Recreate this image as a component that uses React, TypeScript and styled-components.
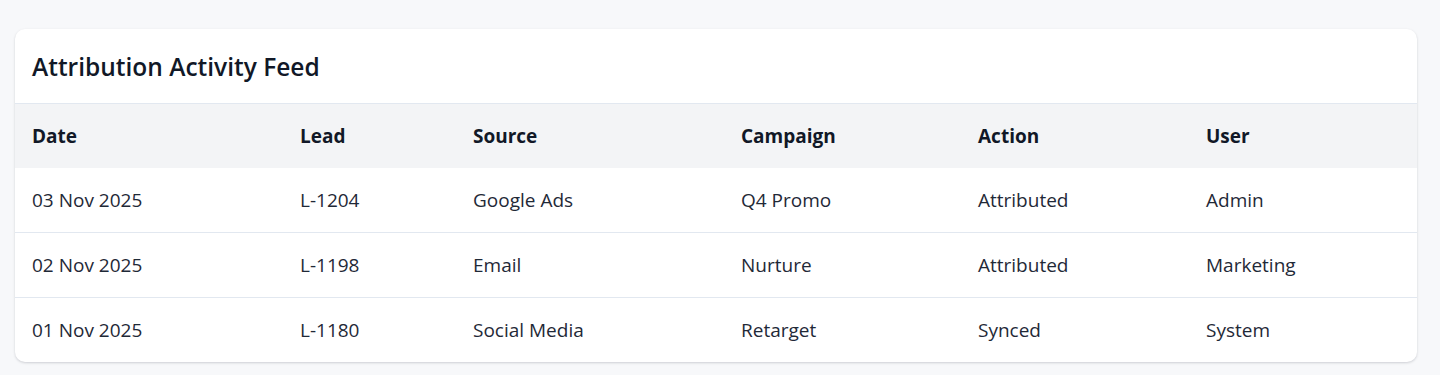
import React from "react";
import styled, { createGlobalStyle } from "styled-components";

const GlobalStyle = createGlobalStyle`
  html, body {
    margin: 0;
    padding: 0;
    background: #f7f8fa;
    font-family: "Open Sans", "Noto Sans", "Liberation Sans", sans-serif;
    color: #111827;
  }
`;

const Page = styled.main`
  padding: 29px 23px 14px 15px;
`;

const Card = styled.section`
  background: #ffffff;
  border-radius: 10px;
  box-shadow: 0 1px 3px rgba(15, 23, 42, 0.12), 0 1px 2px rgba(15, 23, 42, 0.06);
  overflow: hidden;
`;

const CardHeader = styled.header`
  height: 74px;
  display: flex;
  align-items: center;
  padding: 0 17px;
  border-bottom: 1px solid #e2e8f0;
`;

const Title = styled.h2`
  margin: 0;
  font-size: 24.5px;
  font-weight: 600;
  color: #111827;
`;

const Table = styled.table`
  width: 100%;
  border-collapse: collapse;
  table-layout: fixed;
`;

const HeadRow = styled.tr`
  background: #f3f4f6;
`;

const Th = styled.th`
  height: 64px;
  padding: 0 17px;
  text-align: left;
  font-size: 19px;
  font-weight: 700;
  color: #111827;
`;

const Row = styled.tr`
  & + & td {
    border-top: 1px solid #e2e8f0;
  }
`;

const Td = styled.td`
  height: 64px;
  padding: 0 17px;
  font-size: 19px;
  font-weight: 400;
  color: #1f2937;
`;

const columns = [
  { label: "Date", width: 268 },
  { label: "Lead", width: 173 },
  { label: "Source", width: 268 },
  { label: "Campaign", width: 237 },
  { label: "Action", width: 228 },
  { label: "User", width: 228 },
];

const rows = [
  ["03 Nov 2025", "L-1204", "Google Ads", "Q4 Promo", "Attributed", "Admin"],
  ["02 Nov 2025", "L-1198", "Email", "Nurture", "Attributed", "Marketing"],
  ["01 Nov 2025", "L-1180", "Social Media", "Retarget", "Synced", "System"],
];

export default function App() {
  return (
    <>
      <GlobalStyle />
      <Page>
        <Card>
          <CardHeader>
            <Title>Attribution Activity Feed</Title>
          </CardHeader>
          <Table>
            <colgroup>
              {columns.map((c) => (
                <col key={c.label} style={{ width: c.width }} />
              ))}
            </colgroup>
            <thead>
              <HeadRow>
                {columns.map((c) => (
                  <Th key={c.label}>{c.label}</Th>
                ))}
              </HeadRow>
            </thead>
            <tbody>
              {rows.map((r) => (
                <Row key={r[1]}>
                  {r.map((cell, i) => (
                    <Td key={i}>{cell}</Td>
                  ))}
                </Row>
              ))}
            </tbody>
          </Table>
        </Card>
      </Page>
    </>
  );
}
